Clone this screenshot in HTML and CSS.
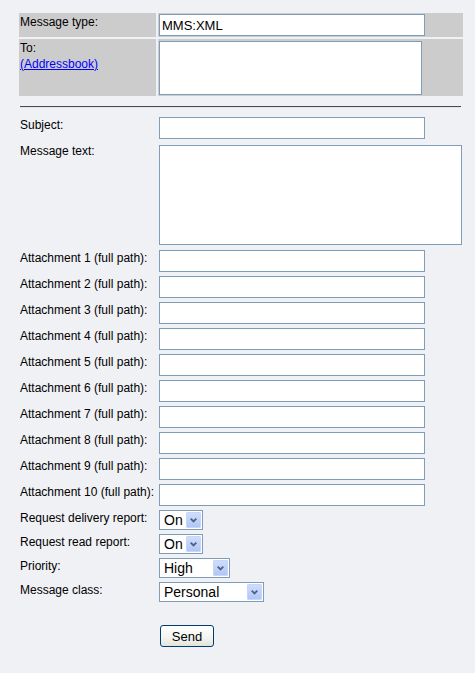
FILE: index.html
```html
<!DOCTYPE html>
<html>
<head>
<meta charset="utf-8">
<title>Send MMS</title>
<link rel="stylesheet" href="styles.css">
</head>
<body>
<div class="page">
  <table class="form-table head-table">
    <colgroup><col class="c-lbl"><col class="c-fld"></colgroup>
    <tr>
      <td class="lbl shaded">Message type:</td>
      <td class="fld shaded"><input class="txt" type="text" value="MMS:XML"></td>
    </tr>
    <tr>
      <td class="lbl shaded">To:<br><a class="link" href="#">(Addressbook)</a></td>
      <td class="fld shaded"><textarea class="to-area"></textarea></td>
    </tr>
  </table>

  <hr class="sep">

  <table class="form-table">
    <colgroup><col class="c-lbl"><col class="c-fld"></colgroup>
    <tr><td class="lbl">Subject:</td><td class="fld"><input class="txt" type="text"></td></tr>
    <tr><td class="lbl">Message text:</td><td class="fld"><textarea class="msg-area"></textarea></td></tr>
    <tr><td class="lbl">Attachment 1 (full path):</td><td class="fld"><input class="txt" type="text"></td></tr>
    <tr><td class="lbl">Attachment 2 (full path):</td><td class="fld"><input class="txt" type="text"></td></tr>
    <tr><td class="lbl">Attachment 3 (full path):</td><td class="fld"><input class="txt" type="text"></td></tr>
    <tr><td class="lbl">Attachment 4 (full path):</td><td class="fld"><input class="txt" type="text"></td></tr>
    <tr><td class="lbl">Attachment 5 (full path):</td><td class="fld"><input class="txt" type="text"></td></tr>
    <tr><td class="lbl">Attachment 6 (full path):</td><td class="fld"><input class="txt" type="text"></td></tr>
    <tr><td class="lbl">Attachment 7 (full path):</td><td class="fld"><input class="txt" type="text"></td></tr>
    <tr><td class="lbl">Attachment 8 (full path):</td><td class="fld"><input class="txt" type="text"></td></tr>
    <tr><td class="lbl">Attachment 9 (full path):</td><td class="fld"><input class="txt" type="text"></td></tr>
    <tr><td class="lbl">Attachment 10 (full path):</td><td class="fld"><input class="txt" type="text"></td></tr>
    <tr><td class="lbl">Request delivery report:</td><td class="fld">
      <span class="sel"><select class="sel-on"><option>On</option><option>Off</option></select><span class="sel-btn"><svg width="7" height="5" viewBox="0 0 7 5"><path d="M0.7 0.7 L3.5 3.5 L6.3 0.7" fill="none" stroke="#4d6185" stroke-width="1.8"/></svg></span></span>
    </td></tr>
    <tr><td class="lbl">Request read report:</td><td class="fld">
      <span class="sel"><select class="sel-on"><option>On</option><option>Off</option></select><span class="sel-btn"><svg width="7" height="5" viewBox="0 0 7 5"><path d="M0.7 0.7 L3.5 3.5 L6.3 0.7" fill="none" stroke="#4d6185" stroke-width="1.8"/></svg></span></span>
    </td></tr>
    <tr><td class="lbl">Priority:</td><td class="fld">
      <span class="sel"><select class="sel-prio"><option>High</option><option>Normal</option><option>Low</option></select><span class="sel-btn"><svg width="7" height="5" viewBox="0 0 7 5"><path d="M0.7 0.7 L3.5 3.5 L6.3 0.7" fill="none" stroke="#4d6185" stroke-width="1.8"/></svg></span></span>
    </td></tr>
    <tr><td class="lbl">Message class:</td><td class="fld">
      <span class="sel"><select class="sel-class"><option>Personal</option><option>Advertisement</option><option>Informational</option><option>Auto</option></select><span class="sel-btn"><svg width="7" height="5" viewBox="0 0 7 5"><path d="M0.7 0.7 L3.5 3.5 L6.3 0.7" fill="none" stroke="#4d6185" stroke-width="1.8"/></svg></span></span>
    </td></tr>
  </table>

  <div class="actions"><button class="send" type="button">Send</button></div>
</div>
</body>
</html>
```

FILE: styles.css
```css
html, body {
  margin: 0;
  padding: 0;
  background: #f0f1f5;
}

body {
  font-family: "Liberation Sans", Arial, sans-serif;
  font-size: 12px;
  color: #000;
}

.page {
  padding: 11px 10px 20px 17px;
}

.form-table {
  border-collapse: separate;
  border-spacing: 2px;
  table-layout: fixed;
  width: 448px;
}

.c-lbl { width: 137px; }
.c-fld { width: 305px; }

.form-table td {
  padding: 1px;
  vertical-align: top;
  line-height: 16px;
}

.form-table td.lbl {
  white-space: nowrap;
  padding-left: 1px;
}

.shaded {
  background: #cccccc;
}

.link {
  color: #0000ff;
  text-decoration: underline;
}

.txt {
  display: block;
  box-sizing: border-box;
  width: 266px;
  height: 22px;
  margin: 0;
  padding: 0 2px;
  border: 1px solid #7f9db9;
  background: #fff;
  font-family: "Liberation Sans", Arial, sans-serif;
  font-size: 13px;
  color: #000;
  outline: none;
}

.to-area,
.msg-area {
  display: block;
  box-sizing: border-box;
  border: 1px solid #7f9db9;
  background: #fff;
  resize: none;
  padding: 2px;
  font-family: "Liberation Sans", Arial, sans-serif;
  font-size: 13px;
  outline: none;
}

.to-area {
  width: 263px;
  height: 54px;
  margin: 1px 0 0 0;
}

.msg-area {
  width: 303px;
  height: 100px;
  margin: 2px 0 1px 0;
}

.sep {
  margin: 8px 0 6px 3px;
  width: 441px;
  height: 0;
  border: 0;
  border-top: 1px solid #4a4a4a;
  border-bottom: 1px solid #e4e5e9;
}

.sel {
  position: relative;
  display: block;
  margin: 0;
  width: max-content;
}

.sel select {
  display: block;
  -webkit-appearance: none;
  appearance: none;
  box-sizing: border-box;
  height: 20px;
  margin: 0;
  padding: 0 0 0 4px;
  border: 1px solid #7f9db9;
  border-radius: 0;
  background: #fff;
  font-family: "Liberation Sans", Arial, sans-serif;
  font-size: 14px;
  color: #000;
  outline: none;
}

.sel-on { width: 44px; }
.sel-prio { width: 71px; }
.sel-class { width: 105px; }

.sel-btn {
  position: absolute;
  top: 2px;
  right: 2px;
  width: 15px;
  height: 16px;
  box-sizing: border-box;
  border: 1px solid #c6d6fa;
  border-radius: 1px;
  background: linear-gradient(#cfdcfc, #b2c7f6);
  display: flex;
  align-items: center;
  justify-content: center;
  pointer-events: none;
}

.actions {
  margin-top: 20px;
  padding-left: 143px;
}

.send {
  box-sizing: border-box;
  width: 54px;
  height: 22px;
  margin: 0;
  padding: 0;
  border: 1px solid #003c74;
  border-radius: 3px;
  background: linear-gradient(#ffffff, #f3f3ef 60%, #e3e2da);
  font-family: "Liberation Sans", Arial, sans-serif;
  font-size: 13px;
  color: #000;
  cursor: pointer;
}
```
